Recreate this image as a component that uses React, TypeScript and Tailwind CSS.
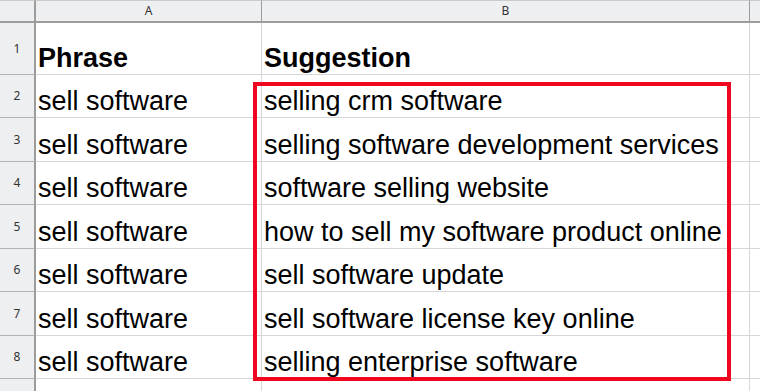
const suggestions = [
  "selling crm software",
  "selling software development services",
  "software selling website",
  "how to sell my software product online",
  "sell software update",
  "sell software license key online",
  "selling enterprise software",
];

// Row 1 is the tall header row, the rest alternate 43/44px so grid lines fall on whole pixels
const rowHeights = ["h-[43px]", "h-[44px]", "h-[43px]", "h-[44px]", "h-[43px]", "h-[44px]", "h-[43px]"];

const cellFont = { fontFamily: '"Liberation Sans", Arial, sans-serif' };
const uiFont = { fontFamily: '"Noto Sans", "DejaVu Sans", sans-serif' };

const RowHeader = ({ n, h }: { n: number | string; h: string }) => (
  <div
    style={uiFont}
    className={`${h} border-r-2 border-b border-r-[#9c9c9c] border-b-[#b4b4b4] bg-[#eeeff0] flex items-center justify-center text-[12px] text-[#333]`}
  >
    {n}
  </div>
);

const Cell = ({
  h,
  bold,
  text,
  right = true,
}: {
  h: string;
  bold?: boolean;
  text?: string;
  right?: boolean;
}) => (
  <div
    style={cellFont}
    className={`${h} border-b border-b-[#d6d6d6] ${right ? "border-r border-r-[#d6d6d6]" : ""} flex items-end pl-[2px] pb-[2px] text-[27px] leading-none text-black whitespace-nowrap overflow-hidden ${bold ? "font-bold" : ""}`}
  >
    {text}
  </div>
);

const App = () => {
  return (
    <div className="relative w-[760px] h-[391px] overflow-hidden bg-white">
      <div className="grid grid-cols-[36px_226px_488px_1fr]">
        {/* column headers */}
        <div className="h-[23px] border-t border-t-[#cbcbcb] border-r-2 border-r-[#9c9c9c] border-b-2 border-b-[#9c9c9c] bg-[#eeeff0]" />
        <div
          style={uiFont}
          className="h-[23px] border-t border-t-[#cbcbcb] border-r border-r-[#9c9c9c] border-b-2 border-b-[#9c9c9c] bg-[#eeeff0] flex items-center justify-center text-[12px] text-[#333]"
        >
          A
        </div>
        <div
          style={uiFont}
          className="h-[23px] border-t border-t-[#cbcbcb] border-r border-r-[#9c9c9c] border-b-2 border-b-[#9c9c9c] bg-[#eeeff0] flex items-center justify-center text-[12px] text-[#333]"
        >
          B
        </div>
        <div className="h-[23px] border-t border-t-[#cbcbcb] border-b-2 border-b-[#9c9c9c] bg-[#eeeff0]" />

        {/* row 1 */}
        <RowHeader n={1} h="h-[52px]" />
        <Cell h="h-[52px]" bold text="Phrase" />
        <Cell h="h-[52px]" bold text="Suggestion" />
        <Cell h="h-[52px]" right={false} />

        {suggestions.map((s, i) => (
          <div key={s} className="contents">
            <RowHeader n={i + 2} h={rowHeights[i]} />
            <Cell h={rowHeights[i]} text="sell software" />
            <Cell h={rowHeights[i]} text={s} />
            <Cell h={rowHeights[i]} right={false} />
          </div>
        ))}

        {/* row 9, cut off at the bottom */}
        <RowHeader n="" h="h-[43px]" />
        <Cell h="h-[43px]" />
        <Cell h="h-[43px]" />
        <Cell h="h-[43px]" right={false} />
      </div>

      {/* highlight around the suggestions */}
      <div className="absolute left-[253px] top-[82px] w-[478px] h-[299px] border-4 border-[#f0061f] pointer-events-none" />
    </div>
  );
};

export default App;
